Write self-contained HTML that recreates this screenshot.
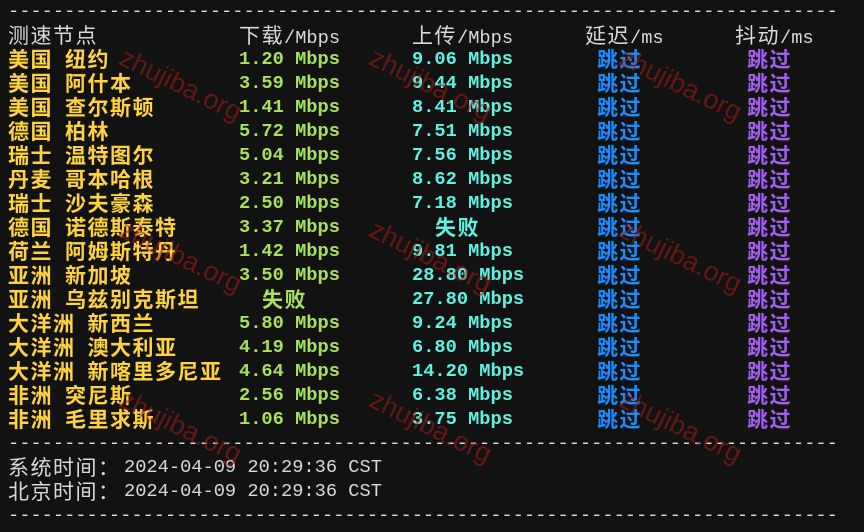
<!DOCTYPE html>
<html><head><meta charset="utf-8"><style>
html,body{margin:0;padding:0;width:864px;height:532px;overflow:hidden;background:#121212;}
body{position:relative;font-family:"Liberation Mono","Noto Sans CJK SC",monospace;font-size:18.7px;}
.t{position:absolute;white-space:pre;line-height:24px;height:24px;top:0;}
.c{font-family:"Noto Sans CJK SC",sans-serif;font-size:21px;letter-spacing:1.5px;line-height:24px;}
.g{margin-left:12px;}
.h{color:#d9d9d9;}
.n{color:#ffd23f;font-weight:bold;}
.d{color:#a8e05f;font-weight:bold;}
.u{color:#5ff2e2;font-weight:bold;}
.l{color:#1a8cff;font-weight:bold;}
.j{color:#a35ef0;font-weight:bold;}
.w{position:absolute;font-family:"Liberation Sans",sans-serif;font-size:27px;color:rgba(170,30,20,0.55);transform:rotate(26deg);transform-origin:0 0;white-space:nowrap;}
</style></head><body>
<div class="t h" style="left:8px;top:-1px">--------------------------------------------------------------------------</div>
<div class="t h" style="left:8px;top:23px"><span class="c">测速节点</span></div>
<div class="t h" style="left:239px;top:23px"><span class="c">下载</span>/Mbps</div>
<div class="t h" style="left:412px;top:23px"><span class="c">上传</span>/Mbps</div>
<div class="t h" style="left:585px;top:23px"><span class="c">延迟</span>/ms</div>
<div class="t h" style="left:735px;top:23px"><span class="c">抖动</span>/ms</div>

<div class="t n" style="left:8px;top:47px"><span class="c">美国</span><span class="c g">纽约</span></div><div class="t d" style="left:239px;top:47px">1.20 Mbps</div><div class="t u" style="left:412px;top:47px">9.06 Mbps</div>
<div class="t n" style="left:8px;top:71px"><span class="c">美国</span><span class="c g">阿什本</span></div><div class="t d" style="left:239px;top:71px">3.59 Mbps</div><div class="t u" style="left:412px;top:71px">9.44 Mbps</div>
<div class="t n" style="left:8px;top:95px"><span class="c">美国</span><span class="c g">查尔斯顿</span></div><div class="t d" style="left:239px;top:95px">1.41 Mbps</div><div class="t u" style="left:412px;top:95px">8.41 Mbps</div>
<div class="t n" style="left:8px;top:119px"><span class="c">德国</span><span class="c g">柏林</span></div><div class="t d" style="left:239px;top:119px">5.72 Mbps</div><div class="t u" style="left:412px;top:119px">7.51 Mbps</div>
<div class="t n" style="left:8px;top:143px"><span class="c">瑞士</span><span class="c g">温特图尔</span></div><div class="t d" style="left:239px;top:143px">5.04 Mbps</div><div class="t u" style="left:412px;top:143px">7.56 Mbps</div>
<div class="t n" style="left:8px;top:167px"><span class="c">丹麦</span><span class="c g">哥本哈根</span></div><div class="t d" style="left:239px;top:167px">3.21 Mbps</div><div class="t u" style="left:412px;top:167px">8.62 Mbps</div>
<div class="t n" style="left:8px;top:191px"><span class="c">瑞士</span><span class="c g">沙夫豪森</span></div><div class="t d" style="left:239px;top:191px">2.50 Mbps</div><div class="t u" style="left:412px;top:191px">7.18 Mbps</div>
<div class="t n" style="left:8px;top:215px"><span class="c">德国</span><span class="c g">诺德斯泰特</span></div><div class="t d" style="left:239px;top:215px">3.37 Mbps</div><div class="t u" style="left:435px;top:215px"><span class="c">失败</span></div>
<div class="t n" style="left:8px;top:239px"><span class="c">荷兰</span><span class="c g">阿姆斯特丹</span></div><div class="t d" style="left:239px;top:239px">1.42 Mbps</div><div class="t u" style="left:412px;top:239px">9.81 Mbps</div>
<div class="t n" style="left:8px;top:263px"><span class="c">亚洲</span><span class="c g">新加坡</span></div><div class="t d" style="left:239px;top:263px">3.50 Mbps</div><div class="t u" style="left:412px;top:263px">28.80 Mbps</div>
<div class="t n" style="left:8px;top:287px"><span class="c">亚洲</span><span class="c g">乌兹别克斯坦</span></div><div class="t d" style="left:262px;top:287px"><span class="c">失败</span></div><div class="t u" style="left:412px;top:287px">27.80 Mbps</div>
<div class="t n" style="left:8px;top:311px"><span class="c">大洋洲</span><span class="c g">新西兰</span></div><div class="t d" style="left:239px;top:311px">5.80 Mbps</div><div class="t u" style="left:412px;top:311px">9.24 Mbps</div>
<div class="t n" style="left:8px;top:335px"><span class="c">大洋洲</span><span class="c g">澳大利亚</span></div><div class="t d" style="left:239px;top:335px">4.19 Mbps</div><div class="t u" style="left:412px;top:335px">6.80 Mbps</div>
<div class="t n" style="left:8px;top:359px"><span class="c">大洋洲</span><span class="c g">新喀里多尼亚</span></div><div class="t d" style="left:239px;top:359px">4.64 Mbps</div><div class="t u" style="left:412px;top:359px">14.20 Mbps</div>
<div class="t n" style="left:8px;top:383px"><span class="c">非洲</span><span class="c g">突尼斯</span></div><div class="t d" style="left:239px;top:383px">2.56 Mbps</div><div class="t u" style="left:412px;top:383px">6.38 Mbps</div>
<div class="t n" style="left:8px;top:407px"><span class="c">非洲</span><span class="c g">毛里求斯</span></div><div class="t d" style="left:239px;top:407px">1.06 Mbps</div><div class="t u" style="left:412px;top:407px">3.75 Mbps</div>

<div class="t l c" style="left:597px;top:47px;height:auto">跳过<br>跳过<br>跳过<br>跳过<br>跳过<br>跳过<br>跳过<br>跳过<br>跳过<br>跳过<br>跳过<br>跳过<br>跳过<br>跳过<br>跳过<br>跳过</div>
<div class="t j c" style="left:747px;top:47px;height:auto">跳过<br>跳过<br>跳过<br>跳过<br>跳过<br>跳过<br>跳过<br>跳过<br>跳过<br>跳过<br>跳过<br>跳过<br>跳过<br>跳过<br>跳过<br>跳过</div>

<div class="t h" style="left:8px;top:431px">--------------------------------------------------------------------------</div>
<div class="t h" style="left:8px;top:455px"><span class="c">系统时间：</span></div><div class="t h" style="left:124px;top:455px">2024-04-09 20:29:36 CST</div>
<div class="t h" style="left:8px;top:479px"><span class="c">北京时间：</span></div><div class="t h" style="left:124px;top:479px">2024-04-09 20:29:36 CST</div>
<div class="t h" style="left:8px;top:503px">--------------------------------------------------------------------------</div>

<div class="w" style="left:128px;top:42px">zhujiba.org</div>
<div class="w" style="left:378px;top:42px">zhujiba.org</div>
<div class="w" style="left:628px;top:42px">zhujiba.org</div>
<div class="w" style="left:-122px;top:42px">zhujiba.org</div>
<div class="w" style="left:128px;top:214px">zhujiba.org</div>
<div class="w" style="left:378px;top:214px">zhujiba.org</div>
<div class="w" style="left:628px;top:214px">zhujiba.org</div>
<div class="w" style="left:-122px;top:214px">zhujiba.org</div>
<div class="w" style="left:128px;top:384px">zhujiba.org</div>
<div class="w" style="left:378px;top:384px">zhujiba.org</div>
<div class="w" style="left:628px;top:384px">zhujiba.org</div>
<div class="w" style="left:-122px;top:384px">zhujiba.org</div>
</body></html>
